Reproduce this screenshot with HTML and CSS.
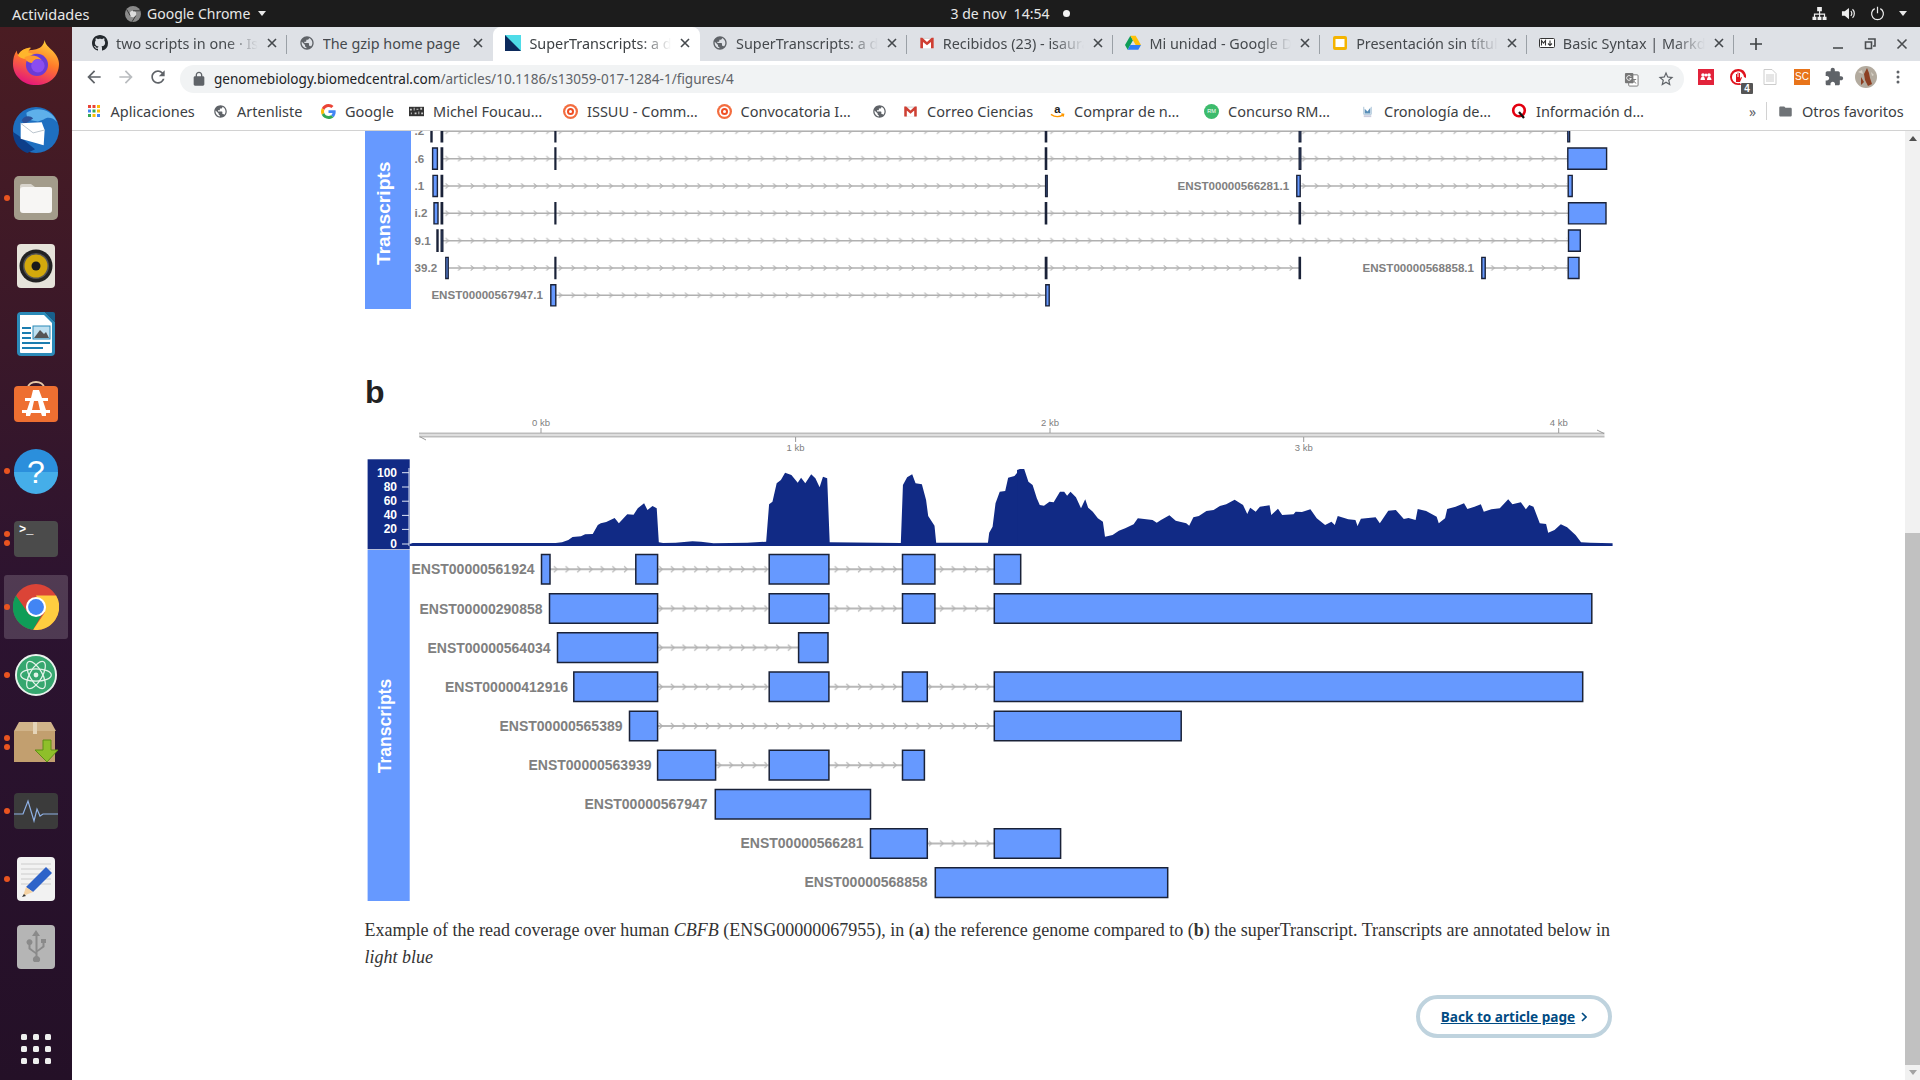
FILE: index.html
```html
<!DOCTYPE html>
<html lang="es">
<head>
<meta charset="utf-8">
<title>SuperTranscripts</title>
<link rel="stylesheet" href="styles.css">
</head>
<body>
<svg class="defs" aria-hidden="true">
  <symbol id="globe" viewBox="0 0 24 24"><path d="M12 2C6.48 2 2 6.48 2 12s4.48 10 10 10 10-4.48 10-10S17.52 2 12 2zm-1 17.93c-3.95-.49-7-3.85-7-7.93 0-.62.08-1.21.21-1.79L9 15v1c0 1.1.9 2 2 2v1.93zm6.9-2.54c-.26-.81-1-1.39-1.9-1.39h-1v-3c0-.55-.45-1-1-1H8v-2h2c.55 0 1-.45 1-1V7h2c1.1 0 2-.9 2-2v-.41c2.93 1.19 5 4.06 5 7.41 0 2.08-.8 3.97-2.1 5.39z"/></symbol>
  <symbol id="close" viewBox="0 0 12 12"><path d="M2 2l8 8M10 2l-8 8" fill="none" stroke="currentColor" stroke-width="1.6"/></symbol>
  <symbol id="gmail" viewBox="0 0 24 24"><path fill="#d9d9d9" d="M3 4h18v16H3z"/><path fill="#fff" d="M6 6h12v14H6z"/><path fill="#cf3f33" d="M2 4h3l7 6.5L19 4h3v16h-4V10.5l-6 5-6-5V20H2z"/></symbol>
  <symbol id="issuu" viewBox="0 0 24 24"><circle cx="12" cy="12" r="12" fill="#f36d3f"/><circle cx="12" cy="12" r="8.400" fill="#fff"/><circle cx="12" cy="12" r="5.600" fill="#f04e23"/><circle cx="12" cy="12" r="2.400" fill="#fff"/></symbol>
</svg>

<header class="topbar">
  <div class="top-left">
    <span class="top-act">Actividades</span>
    <svg class="top-chrome" viewBox="0 0 16 16"><circle cx="8" cy="8" r="8" fill="#8a8a8a"/><circle cx="8" cy="8" r="3.2" fill="#dcdcdc"/><path d="M8 4.8h7M5.2 9.6L1.8 3.6M10.8 9.6L7 15.8" stroke="#3c3c3c" stroke-width="1"/></svg>
    <span class="top-app">Google Chrome</span>
    <span class="caret"></span>
  </div>
  <div class="top-center"><span>3 de nov&nbsp; 14:54</span><span class="rec-dot"></span></div>
  <div class="top-right">
    <svg class="ti" viewBox="0 0 16 16"><path fill="#eee" d="M5.5 1h5v4.5H8.7V8H14v3.5h1.5V15h-4.2v-3.5h1.4V9.2H8.7v2.3h1.4V15H5.900v-3.500h1.600V9.200H3.300v2.300h1.400V15H.5v-3.500H2V8h5.500V5.500h-2z"/></svg>
    <svg class="ti" viewBox="0 0 16 16"><path fill="#eee" d="M1 5.500h3L8.500 2v12L4 10.500H1z"/><path d="M10.500 5.500a3.500 3.500 0 0 1 0 5M12.300 3.500a6.200 6.200 0 0 1 0 9" fill="none" stroke="#eee" stroke-width="1.300"/></svg>
    <svg class="ti" viewBox="0 0 16 16"><path d="M5 2.800a6.300 6.300 0 1 0 6 0M8 .8v7" fill="none" stroke="#eee" stroke-width="1.300"/></svg>
    <span class="caret"></span>
  </div>
</header>

<div class="desk">
  <nav class="dock">
    <div class="dock-item"><svg class="di" viewBox="0 0 48 48"><defs><linearGradient id="ff" x1=".7" y1="0" x2=".3" y2="1"><stop offset="0" stop-color="#ffd23a"/><stop offset=".45" stop-color="#ff7a2a"/><stop offset="1" stop-color="#e3127f"/></linearGradient></defs><path fill="url(#ff)" d="M33 1c1 5 4 7 8 11 5 5 7 10 7 14 0 13-10 22-24 22S0 38 0 26c0-5 1-10 4-14 0 3 1 4 2 5 2-6 8-8 12-8-2 1-3 3-3 3 6-1 16 0 18-11z"/><path fill="#ffb52c" d="M5 17c3-6 9-8 14-8-2 2-3 3-3 5l7 2c-6 2-6 4-6 5-6 0-10-1-12-4z"/><circle cx="25" cy="27" r="11.500" fill="#6a3bd6"/><path fill="#ff9a2d" d="M12 19c6-3 14-2 18 3-6-2-9 0-9 3-4 0-8-2-9-6z"/><circle cx="26" cy="28" r="7" fill="#8a4df0"/></svg></div>
    <div class="dock-item"><svg class="di" viewBox="0 0 48 48"><circle cx="24" cy="24" r="24" fill="#1e6fc0"/><path fill="#0d3f8a" d="M0 26c0 12 8 20 15 22l8-4L6 30z"/><path fill="#5eb0ea" d="M14 6c10-7 27-4 32 10-4-5-10-6-14-3l-6 2-6-1c-3 0-6-3-6-8z"/><path fill="#2b4f96" d="M9 14c2-5 9-6 12-2l-9 6z"/><path fill="#fff" d="M8 17l22-1 3 8-1 16-24-7z"/><path d="M8 17l13 10 12-3" fill="none" stroke="#b8c2cc" stroke-width="1"/></svg></div>
    <div class="dock-item"><span class="run"><i></i></span><svg class="di" viewBox="0 0 46 46"><rect x="1" y="1" width="44" height="44" rx="5" fill="#a39c8b"/><path fill="#d8d4cc" d="M7 11a2 2 0 0 1 2-2h9l4 3h15a2 2 0 0 1 2 2v4H7z"/><rect x="7" y="12" width="32" height="26" rx="3" fill="#f7f6f4"/></svg></div>
    <div class="dock-item"><svg class="di" viewBox="0 0 46 46"><rect x="4" y="1" width="38" height="44" rx="4" fill="#e6e3da"/><circle cx="23" cy="23" r="16.500" fill="#222"/><circle cx="23" cy="23" r="13" fill="#555"/><circle cx="23" cy="23" r="11.500" fill="#d3a90c"/><circle cx="23" cy="23" r="4.500" fill="#1a1a1a"/></svg></div>
    <div class="dock-item"><svg class="di" viewBox="0 0 46 46"><path fill="#2b8ab8" d="M8 1h24l10 10v30a4 4 0 0 1-4 4H8a4 4 0 0 1-4-4V5a4 4 0 0 1 4-4z"/><path fill="#fff" d="M7 4h24l8 8v29a1 1 0 0 1-1 1H8a1 1 0 0 1-1-1z"/><path fill="#18608c" d="M32 1h8a2 2 0 0 1 2 2v8z"/><path fill="#1b7db0" d="M9 16h9v2H9zM9 21h9v2H9zM9 26h9v2H9zM9 31h28v2H9zM9 36h21v2H9z"/><rect x="20" y="15" width="17" height="13" fill="#bfe0f0" stroke="#2b8ab8"/><path fill="#555" d="M21 27l6-8 4 4 2-2 3 6z"/></svg></div>
    <div class="dock-item"><svg class="di" viewBox="0 0 46 46"><path d="M15 8c0-8 16-8 16 0" fill="none" stroke="#e8c9a8" stroke-width="2"/><rect x="1" y="6" width="44" height="36" rx="4" fill="#ee6f31"/><path fill="#fff" d="M20 10h6l3 8h6v3h-5l3 9h4v3h-4v3h-4l-1-3H18l-1 3h-4v-3H9v-3h5l3-9h-5v-3h6zM21 21l-2 9h8l-2-9z"/></svg></div>
    <div class="dock-item"><span class="run"><i></i></span><svg class="di" viewBox="0 0 46 46"><circle cx="23" cy="23" r="22" fill="#2b8fdc"/><path fill="#45aee9" d="M1 24h44a22 22 0 0 1-44 0z"/><text class="help-q" x="23" y="35" text-anchor="middle">?</text></svg></div>
    <div class="dock-item"><span class="run"><i></i><i></i></span><svg class="di" viewBox="0 0 46 38"><rect x="1" y="1" width="44" height="36" rx="4" fill="#4b4b4b"/><text class="term-t" x="6" y="13">&gt;_</text></svg></div>
    <div class="dock-item active"><span class="run"><i></i></span><svg class="di" viewBox="0 0 48 48"><circle cx="24" cy="24" r="24" fill="#db4437"/><path fill="#0f9d58" d="M3 12a24 24 0 0 0 18 35.800l9-15.800H17z"/><path fill="#ffcd40" d="M24 12h21a24 24 0 0 1-24 35.800L33 30z"/><circle cx="24" cy="24" r="10.500" fill="#fff"/><circle cx="24" cy="24" r="8.300" fill="#4285f4"/></svg></div>
    <div class="dock-item"><span class="run"><i></i></span><svg class="di small" viewBox="0 0 44 44"><circle cx="22" cy="22" r="21" fill="#36a76f" stroke="#e9f2ed" stroke-width="2"/><g fill="none" stroke="#e4f3ea" stroke-width="1.300"><ellipse cx="22" cy="22" rx="16" ry="6.500"/><ellipse cx="22" cy="22" rx="16" ry="6.500" transform="rotate(60 22 22)"/><ellipse cx="22" cy="22" rx="16" ry="6.500" transform="rotate(-60 22 22)"/></g><circle cx="22" cy="22" r="2.500" fill="#e4f3ea"/></svg></div>
    <div class="dock-item"><span class="run"><i></i><i></i></span><svg class="di" viewBox="0 0 46 42"><path fill="#d1b48a" d="M6 0h32l5 9H1z"/><rect x="1" y="9" width="41" height="31" fill="#c29f6f"/><rect x="20" y="0" width="4" height="12" fill="#e5d4b8"/><path fill="#8fbf2a" stroke="#5f8f15" d="M30 18h8v10h7L34 40 22 28h8z"/></svg></div>
    <div class="dock-item"><span class="run"><i></i></span><svg class="di" viewBox="0 0 46 38"><rect x="1" y="1" width="44" height="36" rx="4" fill="#3b3b3b"/><path d="M1 22h9l5-13 6 20 3-12 3 7 3-2h15" fill="none" stroke="#8fb1e6" stroke-width="1.200"/></svg></div>
    <div class="dock-item"><span class="run"><i></i></span><svg class="di" viewBox="0 0 46 46"><rect x="4" y="1" width="38" height="44" rx="4" fill="#f2f2f2"/><path d="M8 8h30M8 13h30M8 18h30M8 23h30M8 28h30" stroke="#ccc"/><path fill="#2e63c9" d="M33 11l6 6-19 19-7-5z"/><path fill="#f4d2a4" d="M13 31l7 5-10 4z"/><path fill="#333" d="M11 38l-2 3 4-1z"/></svg></div>
    <div class="dock-item"><svg class="di" viewBox="0 0 46 46"><rect x="4" y="1" width="38" height="44" rx="4" fill="#b5b5b5"/><path fill="#8a8a8a" d="M23 6l4 6h-2.500v14l5-4v-3h-1.500v-4h5v4h-1.500v4l-7 5v4a3.500 3.500 0 0 1 1.500 6h-5a3.500 3.500 0 0 1 1.500-6v-2l-7-5v-4a3 3 0 1 1 2 0v3l5 4V12H19z"/></svg></div>
    <div class="dock-apps"><i></i><i></i><i></i><i></i><i></i><i></i><i></i><i></i><i></i></div>
  </nav>

  <div class="browser">
    <div class="tabstrip">
      <div class="tab"><svg class="fav" viewBox="0 0 16 16"><path fill="#24292e" d="M8 0C3.58 0 0 3.58 0 8c0 3.540 2.290 6.530 5.470 7.590.4.070.55-.17.55-.38 0-.19-.01-.82-.01-1.490-2.010.37-2.530-.49-2.690-.94-.09-.23-.48-.94-.82-1.130-.28-.15-.68-.52-.01-.53.63-.01 1.080.58 1.230.82.72 1.210 1.870.87 2.330.66.07-.52.28-.87.51-1.070-1.780-.2-3.640-.89-3.640-3.950 0-.87.31-1.590.82-2.150-.08-.2-.36-1.020.08-2.120 0 0 .67-.21 2.200.82.64-.18 1.320-.27 2-.27.68 0 1.360.09 2 .27 1.530-1.040 2.200-.82 2.200-.82.44 1.100.16 1.920.08 2.120.51.56.82 1.270.82 2.150 0 3.070-1.870 3.750-3.650 3.950.29.25.54.73.54 1.480 0 1.070-.01 1.930-.01 2.200 0 .21.15.46.55.38A8.013 8.013 0 0 0 16 8c0-4.420-3.580-8-8-8z"/></svg><span class="tab-t">two scripts in one · Issues · isaura</span><svg class="tab-x"><use href="#close"/></svg></div>
      <div class="tab"><svg class="fav globe"><use href="#globe"/></svg><span class="tab-t fit">The gzip home page</span><svg class="tab-x"><use href="#close"/></svg></div>
      <div class="tab on"><svg class="fav" viewBox="0 0 16 16"><rect width="16" height="16" fill="#4fdce8"/><path fill="#0c2a5c" d="M0 0l16 16H0z"/></svg><span class="tab-t">SuperTranscripts: a data-driven</span><svg class="tab-x"><use href="#close"/></svg></div>
      <div class="tab"><svg class="fav globe"><use href="#globe"/></svg><span class="tab-t">SuperTranscripts: a data-driven</span><svg class="tab-x"><use href="#close"/></svg></div>
      <div class="tab"><svg class="fav"><use href="#gmail"/></svg><span class="tab-t">Recibidos (23) - isaura@ciencias</span><svg class="tab-x"><use href="#close"/></svg></div>
      <div class="tab"><svg class="fav" viewBox="0 0 24 22"><path fill="#0f9d58" d="M8 0L0 14l4 7 8-14z"/><path fill="#ffc107" d="M8 0h8l8 14h-8z"/><path fill="#2f7df6" d="M4 21h16l4-7H8z"/></svg><span class="tab-t">Mi unidad - Google Drive</span><svg class="tab-x"><use href="#close"/></svg></div>
      <div class="tab"><svg class="fav" viewBox="0 0 16 16"><rect x="1" y="1" width="14" height="14" rx="2" fill="#f4b400"/><rect x="3.500" y="4" width="9" height="8" fill="#fff"/></svg><span class="tab-t">Presentación sin título - Presentaciones</span><svg class="tab-x"><use href="#close"/></svg></div>
      <div class="tab"><svg class="fav" viewBox="0 0 16 10"><rect x=".5" y=".5" width="15" height="9" rx="1" fill="#fff" stroke="#333"/><path d="M2.500 7.500v-5l2 2.500 2-2.500v5M11 2.500v5M9 5.500l2 2 2-2" fill="none" stroke="#333" stroke-width="1.100"/></svg><span class="tab-t">Basic Syntax | Markdown Guide</span><svg class="tab-x"><use href="#close"/></svg></div>
      <svg class="tab-plus" viewBox="0 0 14 14"><path d="M7 1v12M1 7h12" stroke="#3c4043" stroke-width="1.600"/></svg>
      <div class="winctl">
        <svg viewBox="0 0 12 12"><path d="M1 10h10" stroke="#4a4d50" stroke-width="1.600"/></svg>
        <svg viewBox="0 0 12 12"><path d="M4 1h7v7h-2M1.500 4h6v6.500h-6z" fill="none" stroke="#4a4d50" stroke-width="1.600"/></svg>
        <svg viewBox="0 0 12 12"><path d="M1.500 1.500l9 9M10.500 1.500l-9 9" stroke="#4a4d50" stroke-width="1.600"/></svg>
      </div>
    </div>

    <div class="toolbar">
      <button class="nb"><svg viewBox="0 0 24 24"><path d="M20 11H7.830l5.590-5.590L12 4l-8 8 8 8 1.410-1.410L7.830 13H20v-2z"/></svg></button>
      <button class="nb off"><svg viewBox="0 0 24 24"><path d="M12 4l-1.410 1.410L16.170 11H4v2h12.170l-5.580 5.590L12 20l8-8z"/></svg></button>
      <button class="nb"><svg viewBox="0 0 24 24"><path d="M17.650 6.350C16.200 4.900 14.210 4 12 4c-4.420 0-7.990 3.580-7.990 8s3.570 8 7.990 8c3.730 0 6.840-2.550 7.730-6h-2.080c-.82 2.330-3.040 4-5.650 4-3.310 0-6-2.690-6-6s2.690-6 6-6c1.660 0 3.140.69 4.220 1.780L13 11h7V4l-2.350 2.350z"/></svg></button>
      <div class="omni">
        <svg class="lock" viewBox="0 0 24 24"><path d="M18 8h-1V6c0-2.760-2.240-5-5-5S7 3.240 7 6v2H6c-1.100 0-2 .9-2 2v10c0 1.100.9 2 2 2h12c1.100 0 2-.9 2-2V10c0-1.100-.9-2-2-2zM9 6c0-1.660 1.340-3 3-3s3 1.340 3 3v2H9V6z"/></svg>
        <span class="url"><b>genomebiology.biomedcentral.com</b>/articles/10.1186/s13059-017-1284-1/figures/4</span>
        <svg class="translate" viewBox="0 0 16 16"><rect x="5" y="3" width="10" height="12" rx="1" fill="#fff" stroke="#777"/><rect x="1" y="1" width="9" height="11" rx="1" fill="#777"/><path d="M7.500 5A2.500 2.500 0 1 0 7.800 7H5.800" fill="none" stroke="#fff"/><path d="M9 8h4M11 8c0 2-1 3-2 4M10 9c.5 1.500 1.500 2.500 3 3" fill="none" stroke="#777"/></svg>
        <svg class="star" viewBox="0 0 24 24"><path d="M22 9.240l-7.190-.62L12 2 9.190 8.630 2 9.240l5.460 4.730L5.820 21 12 17.270 18.180 21l-1.630-7.030L22 9.240zM12 15.400l-3.760 2.270 1-4.280-3.320-2.880 4.380-.38L12 6.100l1.710 4.040 4.380.38-3.320 2.880 1 4.280L12 15.400z"/></svg>
      </div>
      <button class="nb"><svg class="ext" viewBox="0 0 16 16"><rect width="16" height="16" fill="#e2233b"/><circle cx="5" cy="6" r="1.800" fill="#fff"/><circle cx="11" cy="6" r="1.800" fill="#fff"/><circle cx="8" cy="6" r="1.500" fill="#fff"/><path d="M2.500 11c0-3 2-3.500 2.500-3.500S7 8 7 11zM9 11c0-3 2-3.500 2-3.500s2.500.5 2.500 3.500z" fill="#fff"/></svg></button>
      <button class="nb"><svg class="ext" viewBox="0 0 16 16"><path d="M8 0a8 8 0 0 0-8 8 8 8 0 0 0 8 8h3l-1-2a6 6 0 1 1 4-6l2 1v-3a8 8 0 0 0-8-6z" fill="#e0141f"/><path d="M6 13V5h1v3h.5V3.500h1V8H9V4h1v6l1-2 1 .5-2 4.500z" fill="#e0141f"/></svg><span class="ext-badge">4</span></button>
      <button class="nb"><svg class="ext" viewBox="0 0 14 16"><path d="M1 .5h8l4 4v11H1z" fill="#fff" stroke="#ccc"/><path d="M3 6h8M3 8h8M3 10h8M3 12h8" stroke="#ccc"/></svg></button>
      <button class="nb"><span class="sc">SC</span></button>
      <button class="nb"><svg viewBox="0 0 24 24"><path d="M20.500 11H19V7c0-1.100-.9-2-2-2h-4V3.500C13 2.120 11.880 1 10.500 1S8 2.120 8 3.500V5H4c-1.100 0-1.990.9-1.990 2v3.800H3.500c1.490 0 2.700 1.210 2.700 2.700s-1.210 2.700-2.700 2.700H2V20c0 1.100.9 2 2 2h3.800v-1.500c0-1.490 1.210-2.700 2.700-2.700 1.490 0 2.700 1.210 2.700 2.700V22H17c1.100 0 2-.9 2-2v-4h1.500c1.380 0 2.500-1.120 2.500-2.500S21.880 11 20.500 11z"/></svg></button>
      <button class="nb"><svg class="avatar" viewBox="0 0 22 22"><circle cx="11" cy="11" r="11" fill="#b3ab9f"/><path fill="#8c3f22" d="M12 2l2 5 1 5 2 6-4 2-3-6-1-6zM6 11l3 5-3 3z"/><path fill="#d9d3c8" d="M3 6l4-2 1 4zM16 6l3 3-2 1z"/></svg></button>
      <button class="nb"><svg viewBox="0 0 24 24"><circle cx="12" cy="6" r="1.800"/><circle cx="12" cy="12" r="1.800"/><circle cx="12" cy="18" r="1.800"/></svg></button>
    </div>

    <div class="bookmarks">
      <div class="bm"><svg class="bi apps" viewBox="0 0 12 12"><g><rect width="3" height="3" fill="#ea4335"/><rect x="4.500" width="3" height="3" fill="#ea4335"/><rect x="9" width="3" height="3" fill="#fbbc05"/><rect y="4.500" width="3" height="3" fill="#4285f4"/><rect x="4.500" y="4.500" width="3" height="3" fill="#34a853"/><rect x="9" y="4.500" width="3" height="3" fill="#fbbc05"/><rect y="9" width="3" height="3" fill="#34a853"/><rect x="4.500" y="9" width="3" height="3" fill="#fbbc05"/><rect x="9" y="9" width="3" height="3" fill="#4285f4"/></g></svg><span>Aplicaciones</span></div>
      <div class="bm"><svg class="bi globe"><use href="#globe"/></svg><span>Artenliste</span></div>
      <div class="bm"><svg class="bi" viewBox="0 0 48 48"><path fill="#EA4335" d="M24 9.500c3.540 0 6.710 1.220 9.210 3.600l6.850-6.850C35.900 2.380 30.470 0 24 0 14.620 0 6.510 5.380 2.560 13.220l7.980 6.190C12.430 13.720 17.740 9.500 24 9.500z"/><path fill="#4285F4" d="M46.980 24.550c0-1.570-.15-3.090-.38-4.550H24v9.020h12.940c-.58 2.960-2.260 5.480-4.780 7.180l7.730 6c4.510-4.180 7.090-10.360 7.090-17.650z"/><path fill="#FBBC05" d="M10.530 28.590c-.48-1.450-.76-2.990-.76-4.590s.27-3.140.76-4.590l-7.980-6.190C.92 16.460 0 20.120 0 24c0 3.880.92 7.540 2.560 10.780l7.970-6.190z"/><path fill="#34A853" d="M24 48c6.480 0 11.930-2.130 15.890-5.810l-7.730-6c-2.150 1.450-4.920 2.300-8.160 2.300-6.260 0-11.570-4.220-13.470-9.910l-7.980 6.190C6.510 42.620 14.620 48 24 48z"/></svg><span>Google</span></div>
      <div class="bm"><svg class="bi" viewBox="0 0 16 12"><rect y="1" width="16" height="10" fill="#333"/><path d="M1 3h2v2H1zM5 2h1v3H5zM8 3h2v1H8zM12 2h2v2h-2zM2 7h1v2H2zM6 7h2v2H6zM10 6h1v3h-1zM13 7h2v2h-2z" fill="#ccc"/></svg><span>Michel Foucau…</span></div>
      <div class="bm"><svg class="bi"><use href="#issuu"/></svg><span>ISSUU - Comm…</span></div>
      <div class="bm"><svg class="bi"><use href="#issuu"/></svg><span>Convocatoria I…</span></div>
      <div class="bm"><svg class="bi globe"><use href="#globe"/></svg></div>
      <div class="bm"><svg class="bi"><use href="#gmail"/></svg><span>Correo Ciencias</span></div>
      <div class="bm"><svg class="bi" viewBox="0 0 16 16"><text class="amz" x="8" y="10" text-anchor="middle">a</text><path d="M1 11c4 3 9 3 13 .5M12 10.500l2.500.5-.5 2.500" fill="none" stroke="#f90" stroke-width="1.500"/></svg><span>Comprar de n…</span></div>
      <div class="bm"><svg class="bi" viewBox="0 0 16 16"><circle cx="8" cy="8" r="8" fill="#3dbb6c"/><text class="rm" x="8" y="10" text-anchor="middle">RM</text></svg><span>Concurso RM…</span></div>
      <div class="bm"><svg class="bi" viewBox="0 0 16 16"><path d="M4 3v8h8V3" fill="none" stroke="#a9c3d6"/><path d="M5 10V5l3 3 3-4v6z" fill="#5a8fb8"/><rect x="4" y="12" width="8" height="2" fill="#ccd"/></svg><span>Cronología de…</span></div>
      <div class="bm"><svg class="bi q" viewBox="0 0 16 16"><circle cx="8" cy="7.500" r="5.800" fill="none" stroke="#e3000f" stroke-width="2.600"/><path d="M8 9l5 6" stroke="#111" stroke-width="2.200"/></svg><span>Información d…</span></div>
      <div class="bm-more">»</div>
      <div class="bm-other"><svg class="bi" viewBox="0 0 24 24"><path fill="#6f7377" d="M10 4H4c-1.100 0-1.990.9-1.990 2L2 18c0 1.100.9 2 2 2h16c1.100 0 2-.9 2-2V8c0-1.100-.9-2-2-2h-8l-2-2z"/></svg><span>Otros favoritos</span></div>
    </div>

    <div class="viewport">
      <main class="article">
        <svg class="figure" viewBox="360 131 1260 774">
          <defs>
            <pattern id="chevA" patternUnits="userSpaceOnUse" x="0" y="131.300" width="12.600" height="27.330"><path d="M4.500 -2.500l3 2.500 -3 2.500" fill="none" stroke="#b2b2b2" stroke-width="1.100"/><path d="M4.500 24.830l3 2.500 -3 2.500" fill="none" stroke="#b2b2b2" stroke-width="1.100"/></pattern>
            <pattern id="chevB" patternUnits="userSpaceOnUse" x="0" y="569.300" width="11.700" height="39.170"><path d="M4 -3l3 3 -3 3" fill="none" stroke="#b0b0b0" stroke-width="1.200"/><path d="M4 36.170l3 3 -3 3" fill="none" stroke="#b0b0b0" stroke-width="1.200"/></pattern>
          </defs>

          <!-- panel a -->
          <rect class="panel" x="365" y="131" width="46" height="178"/>
          <text class="panel-t a" transform="translate(389.500 213.300) rotate(-90)">Transcripts</text>

          <g class="lbl-a">
            <text x="414.600" y="135">.2</text>
            <text x="414.600" y="162.800">.6</text>
            <text x="414.600" y="190">.1</text>
            <text x="414.600" y="217.400">i.2</text>
            <text x="414.600" y="244.800">9.1</text>
            <text x="414.600" y="272">39.2</text>
            <text x="431.400" y="299.400">ENST00000567947.1</text>
            <text x="1177.600" y="190">ENST00000566281.1</text>
            <text x="1362.500" y="272">ENST00000568858.1</text>
          </g>

          <path class="intron-a" d="M443 130.500H1568V132H443ZM443 158H1568V159.500H443ZM1300 185.300H1568V186.800H1300ZM443 185.300H1046V186.800H443ZM443 212.600H1568V214.100H443ZM443 240H1568V241.500H443ZM449 267.300H1299V268.800H449ZM1486 267.300H1568V268.800H1486ZM556 294.600H1046V296.100H556Z"/>
          <path class="chev-a" d="M444 127.300H1567V135.300H444ZM444 154.700H1567V162.700H444ZM444 182H1045V190H444ZM1301 182H1567V190H1301ZM444 209.300H1567V217.300H444ZM444 236.700H1567V244.700H444ZM450 264H1298V272H450ZM1487 264H1567V272H1487ZM557 291.300H1045V299.300H557Z"/>

          <path class="exon-a" transform="translate(0 131.300)" d="M431 -10.600H432V10.600H431ZM441.200 -10.600H442.600V10.600H441.200ZM555 -10.600H555.800V10.600H555ZM1045.400 -10.600H1046.600V10.600H1045.400ZM1299.200 -10.600H1300.800V10.600H1299.200ZM1567.800 -10.600H1569.600V10.600H1567.800Z"/>
          <path class="exon-a" transform="translate(0 158.630)" d="M432.600 -10.600H437.400V10.600H432.600ZM441.200 -10.600H442.600V10.600H441.200ZM555 -10.600H555.800V10.600H555ZM1045.400 -10.600H1046.600V10.600H1045.400ZM1299.200 -10.600H1300.800V10.600H1299.200ZM1567.800 -10.600H1606.600V10.600H1567.800Z"/>
          <path class="exon-a" transform="translate(0 185.960)" d="M433 -10.600H437.400V10.600H433ZM441.200 -10.600H442.600V10.600H441.200ZM1045.600 -10.600H1047.200V10.600H1045.600ZM1296.800 -10.600H1300.200V10.600H1296.800ZM1568.200 -10.600H1572.200V10.600H1568.200Z"/>
          <path class="exon-a" transform="translate(0 213.290)" d="M434 -10.600H438V10.600H434ZM441.200 -10.600H442.600V10.600H441.200ZM555 -10.600H555.800V10.600H555ZM1045.400 -10.600H1046.600V10.600H1045.400ZM1299.200 -10.600H1300.400V10.600H1299.200ZM1568.500 -10.600H1606V10.600H1568.500Z"/>
          <path class="exon-a" transform="translate(0 240.620)" d="M437 -10.600H438V10.600H437ZM441.200 -10.600H442.800V10.600H441.200ZM1568.500 -10.600H1580.300V10.600H1568.500Z"/>
          <path class="exon-a" transform="translate(0 267.950)" d="M445.800 -10.600H448.200V10.600H445.800ZM555 -10.600H555.800V10.600H555ZM1045.400 -10.600H1046.800V10.600H1045.400ZM1299.200 -10.600H1300.400V10.600H1299.200ZM1481.800 -10.600H1485.200V10.600H1481.800ZM1568.200 -10.600H1579V10.600H1568.200Z"/>
          <path class="exon-a" transform="translate(0 295.280)" d="M550.800 -10.600H555.800V10.600H550.800ZM1045.800 -10.600H1049.200V10.600H1045.800Z"/>

          <!-- panel b -->
          <text class="fig-letter" x="365" y="403">b</text>

          <path class="axis" d="M419 433.500H1604.500M419 436.500H1604.500"/>
          <path class="axis thin" d="M541 428V433M1050 428V433M1558.700 428V433M795.600 437V442M1303.700 437V442"/>
          <path class="axis thin" d="M420 436.800L426 440M1604 433.500L1597 430"/>
          <g class="kb">
            <text x="541" y="426">0 kb</text>
            <text x="795.600" y="451">1 kb</text>
            <text x="1050" y="426">2 kb</text>
            <text x="1303.700" y="451">3 kb</text>
            <text x="1558.700" y="426">4 kb</text>
          </g>

          <rect class="cov-panel" x="367.600" y="459.300" width="42.100" height="90"/>
          <g class="ticks">
            <text x="397" y="477">100</text>
            <text x="397" y="491">80</text>
            <text x="397" y="505.200">60</text>
            <text x="397" y="519.400">40</text>
            <text x="397" y="533.400">20</text>
            <text x="397" y="548">0</text>
          </g>
          <path class="tick-lines" d="M402 472.700H409M402 487H409M402 501.200H409M402 515.400H409M402 529.400H409M402 544H409M409 468V546"/>

          <g transform="translate(360 410) scale(.42088 .33333)">
            <polygon class="cov" points="118,408 118,402 125,399 465,399 480,397 495,390 505,381 525,379 535,373 553,372 565,345 572,340 585,336 605,324 615,340 635,313 650,314 660,295 675,280 683,300 695,288 705,295 710,397 720,399 750,398 790,394 810,395 840,400 920,398 965,395 972,283 980,275 990,220 1000,210 1010,188 1025,195 1040,218 1048,203 1058,220 1072,193 1082,205 1092,232 1100,200 1110,205 1116,397 1285,399 1290,225 1300,202 1312,193 1320,220 1335,223 1345,270 1350,318 1365,347 1369,398 1492,398 1495,368 1503,350 1510,280 1520,245 1533,243 1540,203 1555,198 1568,178 1568,408"/>
          </g>
          <g transform="translate(980 410) scale(.42088 .33333)">
            <polygon class="cov" points="88,408 88,180 95,177 105,177 115,215 125,225 135,265 142,285 152,287 165,275 175,277 190,245 200,245 207,257 215,245 228,262 240,295 250,268 257,293 268,305 280,325 292,335 297,380 315,375 330,362 345,355 365,343 375,325 395,328 410,330 420,338 430,330 450,316 465,332 490,340 497,347 507,322 520,318 538,303 555,300 570,288 585,283 605,269 625,285 635,312 642,293 655,305 665,290 688,286 692,315 708,296 718,315 745,313 750,305 765,306 785,298 800,325 820,345 835,335 843,345 850,318 875,328 892,330 897,348 905,326 940,322 950,340 970,302 988,300 1007,327 1018,324 1035,330 1040,297 1060,303 1085,320 1090,340 1105,325 1110,297 1130,290 1150,280 1158,297 1175,290 1190,283 1197,305 1215,298 1235,295 1255,268 1265,283 1285,277 1297,298 1305,285 1315,290 1330,340 1345,342 1350,368 1365,360 1380,343 1395,352 1415,375 1428,397 1450,398 1503,400 1503,408"/>
          </g>

          <rect class="panel" x="367.600" y="550" width="42.100" height="351"/>
          <text class="panel-t b" transform="translate(391 726) rotate(-90)">Transcripts</text>

          <g class="lbl-b">
            <text x="534.500" y="574.300">ENST00000561924</text>
            <text x="542.500" y="613.500">ENST00000290858</text>
            <text x="550.500" y="652.600">ENST00000564034</text>
            <text x="568" y="691.800">ENST00000412916</text>
            <text x="622.500" y="731">ENST00000565389</text>
            <text x="651.500" y="770.200">ENST00000563939</text>
            <text x="707.500" y="809.300">ENST00000567947</text>
            <text x="863.500" y="848">ENST00000566281</text>
            <text x="927.500" y="887.200">ENST00000568858</text>
          </g>

          <path class="intron-b" d="M550 568.300H635V570.300H550ZM657.600 568.300H768.700V570.300H657.600ZM829 568.300H902.500V570.300H829ZM935 568.300H994V570.300H935ZM657.600 607.500H768.700V609.500H657.600ZM829 607.500H902.500V609.500H829ZM935 607.500H994V609.500H935ZM657.600 646.600H798.600V648.600H657.600ZM657.600 685.800H768.700V687.800H657.600ZM829 685.800H902.500V687.800H829ZM927.300 685.800H994V687.800H927.300ZM657.600 725H994V727H657.600ZM715.600 764.200H768.700V766.200H715.600ZM829 764.200H902.500V766.200H829ZM927.300 842.500H994V844.500H927.300Z"/>
          <path class="chev-b" d="M552 565.300H634V573.300H552ZM659 565.300H767V573.300H659ZM830 565.300H901V573.300H830ZM936 565.300H993V573.300H936ZM659 604.500H767V612.500H659ZM830 604.500H901V612.500H830ZM936 604.500H993V612.500H936ZM659 643.600H797V651.600H659ZM659 682.800H767V690.800H659ZM830 682.800H901V690.800H830ZM929 682.800H993V690.800H929ZM659 722H993V730H659ZM717 761.200H767V769.200H717ZM830 761.200H901V769.200H830ZM929 839.500H993V847.500H929Z"/>

          <path class="exon-b" transform="translate(0 569.300)" d="M541.500 -14.800H550V14.800H541.500ZM635.800 -14.800H657.600V14.800H635.800ZM769.200 -14.800H828.900V14.800H769.200ZM902.500 -14.800H934.900V14.800H902.500ZM994.300 -14.800H1020.700V14.800H994.300Z"/>
          <path class="exon-b" transform="translate(0 608.470)" d="M549.500 -14.800H657.600V14.800H549.500ZM769.200 -14.800H828.900V14.800H769.200ZM902.500 -14.800H934.900V14.800H902.500ZM994.300 -14.800H1591.800V14.800H994.300Z"/>
          <path class="exon-b" transform="translate(0 647.640)" d="M557.500 -14.800H657.600V14.800H557.500ZM798.600 -14.800H828V14.800H798.600Z"/>
          <path class="exon-b" transform="translate(0 686.810)" d="M573.800 -14.800H657.600V14.800H573.800ZM769.200 -14.800H828.900V14.800H769.200ZM902.500 -14.800H927.300V14.800H902.500ZM994.300 -14.800H1582.700V14.800H994.300Z"/>
          <path class="exon-b" transform="translate(0 725.980)" d="M629.500 -14.800H657.600V14.800H629.500ZM994.300 -14.800H1181.200V14.800H994.300Z"/>
          <path class="exon-b" transform="translate(0 765.150)" d="M657.600 -14.800H715.600V14.800H657.600ZM769.200 -14.800H828.900V14.800H769.200ZM902.500 -14.800H924.400V14.800H902.500Z"/>
          <path class="exon-b" transform="translate(0 804.320)" d="M715.300 -14.800H870.500V14.800H715.300Z"/>
          <path class="exon-b" transform="translate(0 843.490)" d="M870.500 -14.800H927.300V14.800H870.500ZM994.300 -14.800H1060.600V14.800H994.300Z"/>
          <path class="exon-b" transform="translate(0 882.660)" d="M935.300 -14.800H1167.700V14.800H935.300Z"/>
        </svg>

        <p class="caption">Example of the read coverage over human <i>CBFB</i> (ENSG00000067955), in (<b>a</b>) the reference genome compared to (<b>b</b>) the superTranscript. Transcripts are annotated below in <i>light blue</i></p>

        <div class="back-row">
          <a class="back" href="#"><span>Back to article page</span><svg viewBox="0 0 6 10"><path d="M1 1l4 4-4 4" fill="none" stroke="currentColor" stroke-width="1.600"/></svg></a>
        </div>
      </main>
      <div class="scrollbar">
        <div class="sb-btn up"></div>
        <div class="sb-thumb"></div>
        <div class="sb-btn down"></div>
      </div>
    </div>
  </div>
</div>
</body>
</html>
```
FILE: styles.css
```css
* { box-sizing: border-box; }
html, body { margin: 0; height: 100%; overflow: hidden; background: #fff; }
body { width: 1920px; height: 1080px; display: flex; flex-direction: column; font-family: "Noto Sans", "Liberation Sans", sans-serif; }
.defs { position: absolute; width: 0; height: 0; }

/* top bar */
.topbar { height: 27px; flex: none; background: #1c1c1c; color: #e8e8e8; display: grid; grid-template-columns: 1fr auto 1fr; align-items: center; font-size: 14px; padding: 0 13px 0 12px; }
.top-left { display: flex; align-items: center; }
.top-act { width: 113px; font-size: 14.500px; }
.top-chrome { width: 16px; height: 16px; margin-right: 6px; }
.top-app { margin-right: 8px; }
.caret { width: 0; height: 0; border-left: 4.5px solid transparent; border-right: 4.5px solid transparent; border-top: 5px solid #e8e8e8; }
.top-center { display: flex; align-items: center; gap: 14px; padding-left: 102px; }
.rec-dot { width: 7px; height: 7px; border-radius: 50%; background: #f2f2f2; }
.top-right { display: flex; justify-content: flex-end; align-items: center; gap: 14px; }
.ti { width: 15px; height: 15px; }

.desk { flex: 1; display: flex; min-height: 0; }

/* dock */
.dock { width: 72px; flex: none; background: linear-gradient(180deg, #4a1c22 0%, #3a1829 30%, #2c1330 55%, #241027 100%); display: flex; flex-direction: column; padding-top: 1px; }
.dock-item { height: 68.1px; flex: none; display: flex; align-items: center; justify-content: center; position: relative; }
.dock-item.active::before { content: ""; position: absolute; left: 4px; right: 4px; top: 2px; bottom: 2px; background: rgba(255,255,255,.17); border-radius: 3px; }
.di { width: 46px; height: 46px; position: relative; }
.di.small { width: 42px; height: 42px; }
.run { position: absolute; left: 4px; top: 0; bottom: 0; width: 6px; display: flex; flex-direction: column; justify-content: center; gap: 3px; z-index: 1; }
.run i { width: 6px; height: 6px; border-radius: 50%; background: #e95420; }
.help-q { font: 400 32px "Liberation Sans", sans-serif; fill: #fff; }
.term-t { font: 700 12px "Liberation Mono", monospace; fill: #fff; }
.dock-apps { margin-top: auto; margin-bottom: 16px; align-self: center; display: grid; grid-template-columns: repeat(3, 6px); gap: 6px; }
.dock-apps i { width: 6px; height: 6px; border-radius: 1.500px; background: #efefef; }

/* browser chrome */
.browser { flex: 1; display: flex; flex-direction: column; min-width: 0; }
.tabstrip { height: 34px; flex: none; background: #dee1e6; display: flex; align-items: center; padding-left: 8px; position: relative; }
.tab { width: 206.7px; height: 34px; flex: none; display: flex; align-items: center; padding: 0 8px 2px 12px; position: relative; color: #45494d; font-size: 14.400px; }
.tab::after { content: ""; position: absolute; right: 0; top: 8px; bottom: 7px; width: 1px; background: #9aa0a6; }
.tab.on { background: #fff; border-radius: 8px 8px 0 0; color: #3c4043; }
.tab.on::after { display: none; }
.tab:nth-child(2)::after { display: none; }
.fav { width: 16px; height: 16px; flex: none; }
.fav.globe, .bi.globe { fill: #5f6368; }
.tab-t { margin-left: 8px; margin-right: 6px; flex: 1; white-space: nowrap; overflow: hidden; -webkit-mask-image: linear-gradient(90deg, #000 78%, transparent 100%); mask-image: linear-gradient(90deg, #000 78%, transparent 100%); }
.tab-t.fit { -webkit-mask-image: none; mask-image: none; }
.tab-x { width: 12px; height: 12px; flex: none; margin-left: 2px; margin-right: 1px; color: #45494d; }
.tab-plus { width: 14px; height: 14px; margin-left: 15px; }
.winctl { margin-left: auto; display: flex; gap: 20px; padding-right: 12px; align-items: center; }
.winctl svg { width: 12px; height: 12px; }

.toolbar { height: 32px; flex: none; background: #fff; display: flex; align-items: flex-end; padding: 0 6px; }
.nb { width: 32px; height: 32px; padding: 0; border: 0; background: none; display: flex; align-items: center; justify-content: center; position: relative; flex: none; }
.nb svg { width: 20px; height: 20px; fill: #5f6368; }
.nb.off svg { fill: #b9bcbf; }
.nb svg.ext { width: 16px; height: 16px; }
.nb svg.avatar { width: 22px; height: 22px; }
.ext-badge { position: absolute; right: 1px; bottom: -1px; width: 12px; height: 11px; background: #555; color: #fff; font: 700 10px/11px "Liberation Sans", sans-serif; text-align: center; border-radius: 1px; }
.sc { width: 16px; height: 16px; background: #e8741a; color: #fff; font: 400 10px/16px "Liberation Sans", sans-serif; text-align: center; }
.omni { flex: 1; height: 28px; margin: 0 6px; background: #f1f3f4; border-radius: 14px; display: flex; align-items: center; padding-left: 11px; padding-right: 9px; }
.lock { width: 16px; height: 16px; fill: #5f6368; flex: none; }
.url { margin-left: 7px; margin-bottom: 1px; flex: 1; font-size: 13.550px; color: #5f6368; white-space: nowrap; }
.url b { font-weight: 400; color: #202124; }
.translate { width: 15px; height: 15px; margin-right: 18px; }
.star { width: 18px; height: 18px; fill: #5f6368; }

.bookmarks { height: 38px; flex: none; background: #fff; border-bottom: 1px solid #d2d2d2; display: grid; grid-template-columns: 125.500px 108px 88px 154px 153.600px 155.400px 31px 147px 154px 156px 151px 238px 17px auto; align-items: center; padding: 0 0 1px 15.500px; font-size: 14.500px; color: #3c4043; }
.bm { display: flex; align-items: center; gap: 9px; min-width: 0; white-space: nowrap; }
.bi { width: 15px; height: 15px; flex: none; }
.bi.apps { width: 12px; height: 12px; margin-right: 2px; }
.bi.q { width: 16px; height: 16px; }
.amz { font: 700 12px "Liberation Sans", sans-serif; fill: #222; }
.rm { font: 400 6px "Liberation Sans", sans-serif; fill: #fff; }
.bm-more { color: #5f6368; font-size: 14px; }
.bm-other { display: flex; align-items: center; gap: 9px; white-space: nowrap; border-left: 1px solid #d2d2d2; padding-left: 11px; height: 18px; }

/* page */
.viewport { flex: 1; display: flex; justify-content: space-between; min-height: 0; background: #fff; overflow: hidden; }
.article { flex: none; width: 1548px; padding-left: 288px; }
.figure { display: block; width: 1260px; height: 774px; }
.panel { fill: #6699ff; }
.panel-t { font: 700 17.500px "Liberation Sans", sans-serif; fill: #fff; text-anchor: middle; }
.panel-t.a { font-size: 19.200px; }
.cov-panel, .cov { fill: #112a85; }
.lbl-a text { font: 700 11.600px "Liberation Sans", sans-serif; fill: #808080; }
.lbl-b text { font: 700 14px "Liberation Sans", sans-serif; fill: #808080; text-anchor: end; }
.intron-a { fill: #b0b0b0; stroke: none; }
.chev-a { fill: url(#chevA); }
.intron-b { fill: #b8b8b8; }
.chev-b { fill: url(#chevB); }
.exon-a { fill: #6699ff; stroke: #1a2238; stroke-width: 1.400; }
.exon-b { fill: #6699ff; stroke: #1a2238; stroke-width: 1.500; }
.fig-letter { font: 700 32px "Liberation Sans", sans-serif; fill: #222; }
.axis { fill: none; stroke: #bdbdbd; stroke-width: 2; }
.axis.thin { stroke-width: 1; stroke: #999; }
.kb text { font: 400 9.500px "Liberation Sans", sans-serif; fill: #808080; text-anchor: middle; }
.ticks text { font: 700 12px "Liberation Sans", sans-serif; fill: #fff; text-anchor: end; }
.tick-lines { stroke: #dfe6f5; stroke-width: 1; fill: none; }

.caption { margin: 12px 9px 0 4.500px; font: 400 18px/27px "Liberation Serif", serif; color: #333; }
.back-row { display: flex; justify-content: flex-end; margin-top: 24px; padding-right: 8px; }
.back { width: 196px; height: 43px; border: 4px solid #bfd3de; border-radius: 22px; display: flex; align-items: center; justify-content: center; gap: 6px; font: 700 13.600px "Noto Sans", sans-serif; color: #004b83; text-decoration: none; }
.back span { text-decoration: underline; }
.back svg { width: 6px; height: 10px; }

.scrollbar { width: 15px; flex: none; background: #f1f1f1; display: flex; flex-direction: column; }
.sb-btn { height: 15px; flex: none; position: relative; }
.sb-btn::after { content: ""; position: absolute; left: 3.500px; top: 5px; border-left: 4px solid transparent; border-right: 4px solid transparent; }
.sb-btn.up::after { border-bottom: 5px solid #505050; }
.sb-btn.down::after { border-top: 5px solid #a3a3a3; }
.sb-thumb { height: 532px; margin-top: auto; background: #c1c1c1; }
```
